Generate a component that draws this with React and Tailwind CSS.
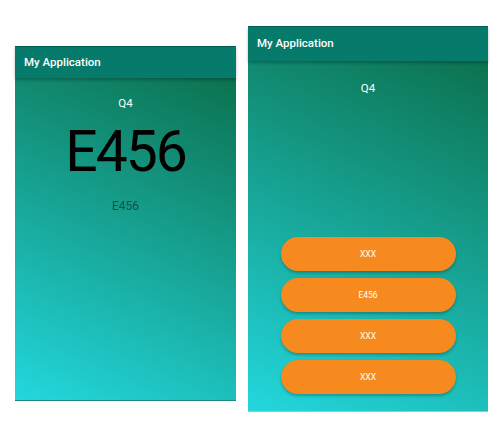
import React from "react";

function Header() {
  return (
    <div className="h-full w-full flex items-center bg-[#067a6b] px-[9px] shadow-[0_2px_3px_rgba(0,0,0,0.25)] relative z-10 border-t border-[#045c50]">
      <span className="text-white text-[11.5px] font-medium font-['Roboto',sans-serif]">My Application</span>
    </div>
  );
}

export default function App() {
  return (
    <div className="w-[502px] h-[432px] bg-white relative font-['Roboto',sans-serif]">
      <div className="flex items-start pl-[15px] gap-[12px]">
        <div className="mt-[46px] w-[221px] h-[355px] flex flex-col bg-linear-[204deg] from-[#0a6a44] to-[#23d7dd] border-b border-[#1a8a80]">
          <div className="h-[32px]">
            <Header />
          </div>
          <div className="flex flex-col items-center">
            <div className="mt-[17px] text-white text-[11.5px] leading-[16px]">Q4</div>
            <div className="mt-[8px] text-black text-[57px] leading-[66px] font-normal font-['Roboto',sans-serif] tracking-[-2px]">E456</div>
            <div className="mt-[13px] text-[#15504a] text-[12px] leading-[16px]">E456</div>
          </div>
        </div>
        <div className="mt-[26px] w-[240px] h-[386px] flex flex-col bg-linear-[204deg] from-[#0a6a44] to-[#23d7dd] border-b border-[#7fd5d0]">
          <div className="h-[35px]">
            <Header />
          </div>
          <div className="flex flex-col items-center">
            <div className="mt-[19px] text-white text-[11.5px] leading-[16px]">Q4</div>
            <div className="mt-[141px] flex flex-col gap-[7px]">
              {["XXX", "E456", "XXX", "XXX"].map((t, i) => (
                <div
                  key={i}
                  className="w-[175px] h-[34px] rounded-full bg-[#f68a1f] flex items-center justify-center text-white text-[8.5px] shadow-[0_2px_3px_rgba(0,0,0,0.25)]"
                >
                  {t}
                </div>
              ))}
            </div>
          </div>
        </div>
      </div>
    </div>
  );
}
